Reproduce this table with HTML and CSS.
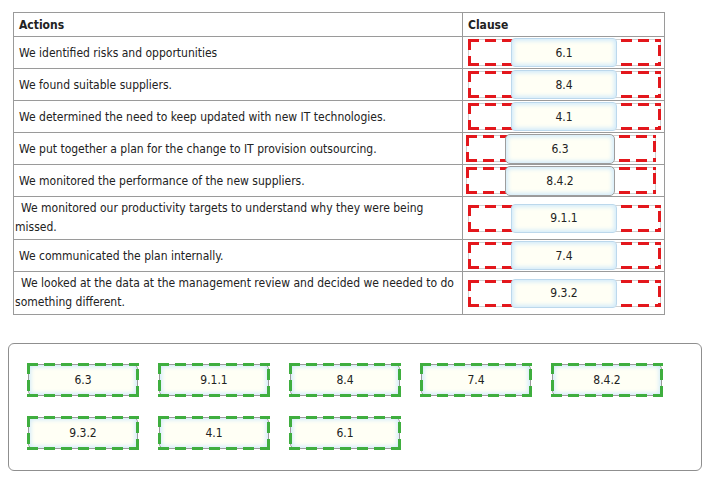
FILE: index.html
```html
<!DOCTYPE html>
<html>
<head>
<meta charset="utf-8">
<link rel="stylesheet" href="styles.css">
</head>
<body>
<table class="match">
  <tr class="head"><th class="act-h">Actions</th><th class="cl-h">Clause</th></tr>
  <tr><td class="act">We identified risks and opportunities</td><td class="cl"><div class="slot"><div class="chip">6.1</div></div></td></tr>
  <tr><td class="act">We found suitable suppliers.</td><td class="cl"><div class="slot"><div class="chip">8.4</div></div></td></tr>
  <tr><td class="act">We determined the need to keep updated with new IT technologies.</td><td class="cl"><div class="slot"><div class="chip">4.1</div></div></td></tr>
  <tr><td class="act">We put together a plan for the change to IT provision outsourcing.</td><td class="cl"><div class="slot shift"><div class="chip dark">6.3</div></div></td></tr>
  <tr><td class="act">We monitored the performance of the new suppliers.</td><td class="cl"><div class="slot shift"><div class="chip dark">8.4.2</div></div></td></tr>
  <tr><td class="act two"><span class="lead">We monitored our productivity targets to understand why they were being</span><br>missed.</td><td class="cl"><div class="slot"><div class="chip">9.1.1</div></div></td></tr>
  <tr><td class="act">We communicated the plan internally.</td><td class="cl"><div class="slot"><div class="chip">7.4</div></div></td></tr>
  <tr><td class="act two"><span class="lead">We looked at the data at the management review and decided we needed to do</span><br>something different.</td><td class="cl"><div class="slot"><div class="chip">9.3.2</div></div></td></tr>
</table>

<div class="bank">
  <div class="opt"><div class="chip">6.3</div></div>
  <div class="opt"><div class="chip">9.1.1</div></div>
  <div class="opt"><div class="chip">8.4</div></div>
  <div class="opt"><div class="chip">7.4</div></div>
  <div class="opt"><div class="chip">8.4.2</div></div>
  <div class="opt"><div class="chip">9.3.2</div></div>
  <div class="opt"><div class="chip">4.1</div></div>
  <div class="opt"><div class="chip">6.1</div></div>
</div>
</body>
</html>
```
FILE: styles.css
```css
* { box-sizing: border-box; }

body {
  margin: 0;
  background: #fff;
  font-family: "DejaVu Sans Condensed", "DejaVu Sans", sans-serif;
  font-size: 12px;
  color: #222;
}

.match {
  border-collapse: collapse;
  margin: 12px 0 0 13px;
  width: 652px;
}

.match th,
.match td {
  border: 1px solid #9a9a9a;
  text-align: left;
  padding: 0;
}

.match th {
  height: 24px;
  font-weight: bold;
  padding-left: 5px;
  vertical-align: middle;
}

.act-h { width: 449px; }

td.act {
  height: 32px;
  padding-left: 5px;
  vertical-align: middle;
}

td.act.two {
  height: 43px;
  padding-left: 1px;
  line-height: 19px;
}

.lead { padding-left: 6px; }

td.cl {
  padding: 0 3px 0 5px;
  vertical-align: middle;
}

.slot {
  position: relative;
  height: 27px;
  border: 1px solid #cfcfcf;
  border-radius: 4px;
  display: flex;
  align-items: center;
  padding-left: 42px;
}

.slot.shift {
  padding-left: 38px;
  margin-right: 5px;
  margin-left: -2px;
}

.slot::after {
  content: "";
  position: absolute;
  inset: -1px;
  background:
    repeating-linear-gradient(90deg, #e3171c 0 11px, transparent 11px 17px) left top / 100% 3px no-repeat,
    repeating-linear-gradient(90deg, #e3171c 0 11px, transparent 11px 17px) left bottom / 100% 3px no-repeat,
    repeating-linear-gradient(180deg, #e3171c 0 11px, transparent 11px 17px) left top / 3px 100% no-repeat,
    repeating-linear-gradient(180deg, transparent 0 6px, #e3171c 6px 17px) right top / 3px 100% no-repeat;
}

.chip {
  position: relative;
  z-index: 1;
  display: flex;
  align-items: center;
  justify-content: center;
  width: 106px;
  height: 29px;
  border: 1px solid #bcd8ec;
  border-radius: 4px;
  background: #fffff5;
  box-shadow: inset 0 0 4px 2px #d3ebfa;
  color: #222;
}

.chip.dark {
  border-color: #9d9d9d;
  border-radius: 5px;
  width: 110px;
  height: 30px;
}

.bank {
  margin: 28px 0 0 8px;
  width: 694px;
  height: 128px;
  border: 1px solid #8f8f8f;
  border-radius: 6px;
  padding: 20px 0 0 19px;
  display: grid;
  grid-template-columns: repeat(5, 110px);
  grid-auto-rows: 32px;
  column-gap: 21px;
  row-gap: 21px;
}

.opt {
  position: relative;
}

.opt .chip {
  width: 100%;
  height: 100%;
  border-color: #9a9a9a;
  border-radius: 5px;
}

.opt::after {
  content: "";
  position: absolute;
  z-index: 2;
  inset: -1px;
  background:
    repeating-linear-gradient(90deg, #3fae3f 0 11px, transparent 11px 17px) left top / 100% 3px no-repeat,
    repeating-linear-gradient(90deg, #3fae3f 0 11px, transparent 11px 17px) left bottom / 100% 3px no-repeat,
    repeating-linear-gradient(180deg, #3fae3f 0 11px, transparent 11px 17px) left top / 3px 100% no-repeat,
    repeating-linear-gradient(180deg, transparent 0 6px, #3fae3f 6px 17px) right top / 3px 100% no-repeat;
}
```
